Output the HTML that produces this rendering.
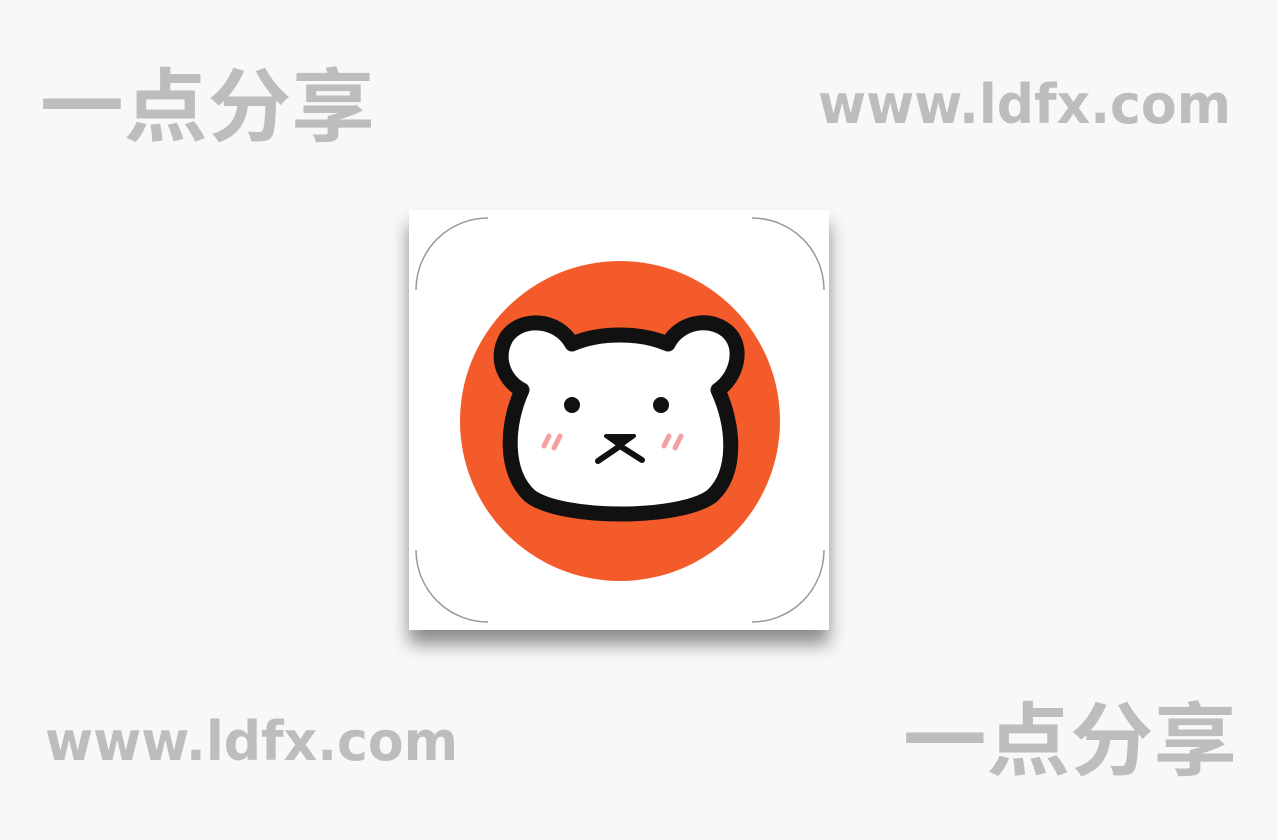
<!DOCTYPE html>
<html><head><meta charset="utf-8"><style>
html,body{margin:0;padding:0;background:#f8f8f8;}
body{width:1278px;height:840px;overflow:hidden;position:relative;}
svg{position:absolute;left:0;top:0;}
</style></head><body>
<svg width="1278" height="840" viewBox="0 0 1278 840">
<defs>
<filter id="sh" x="-20%" y="-20%" width="140%" height="150%">
<feGaussianBlur in="SourceAlpha" stdDeviation="9"/>
<feOffset dx="0" dy="14"/>
<feComponentTransfer><feFuncA type="linear" slope="0.45"/></feComponentTransfer>
<feMerge><feMergeNode/><feMergeNode in="SourceGraphic"/></feMerge>
</filter>
</defs>
<g fill="#bdbdbd" font-weight="bold">
<text x="40" y="135" font-size="80" font-family="Noto Sans CJK SC, WenQuanYi Zen Hei, sans-serif" textLength="335" lengthAdjust="spacingAndGlyphs">一点分享</text>
<text x="903" y="769" font-size="80" font-family="Noto Sans CJK SC, WenQuanYi Zen Hei, sans-serif" textLength="334" lengthAdjust="spacingAndGlyphs">一点分享</text>
<text x="818" y="123" font-size="54" font-family="DejaVu Sans, Liberation Sans, sans-serif" textLength="413" lengthAdjust="spacingAndGlyphs">www.ldfx.com</text>
<text x="45" y="760" font-size="54" font-family="DejaVu Sans, Liberation Sans, sans-serif" textLength="413" lengthAdjust="spacingAndGlyphs">www.ldfx.com</text>
</g>
<rect x="409" y="210" width="420" height="420" fill="#fff" filter="url(#sh)"/>
<g fill="none" stroke="#999" stroke-width="1.5">
<path d="M416,290 A72,72 0 0 1 488,218"/>
<path d="M752,218 A72,72 0 0 1 824,290"/>
<path d="M416,550 A72,72 0 0 0 488,622"/>
<path d="M824,550 A72,72 0 0 1 752,622"/>
</g>
<circle cx="620" cy="421" r="160" fill="#f45b2b"/>
<path d="M572,344 C558,318 520,316 506,338 C494,360 506,382 522,390 C506,425 504,472 530,496 C562,520 680,520 712,496 C738,472 734,425 718,390 C736,378 744,350 730,334 C714,316 680,320 668,344 C640,332 600,332 572,344 Z" fill="#fff" stroke="#111" stroke-width="15" stroke-linejoin="round"/>
<circle cx="572" cy="405" r="8" fill="#111"/>
<circle cx="661" cy="405" r="8" fill="#111"/>
<g stroke="#f4a0a0" stroke-width="5" stroke-linecap="round">
<line x1="544" y1="446" x2="549" y2="436"/><line x1="554" y1="448" x2="560" y2="436"/>
<line x1="664" y1="446" x2="669" y2="436"/><line x1="675" y1="448" x2="681" y2="436"/>
</g>
<path d="M606,436 L634,436 L620,446 Z" fill="#111" stroke="#111" stroke-width="4" stroke-linejoin="round"/>
<path d="M620,446 L598,461 M620,446 L642,460" fill="none" stroke="#111" stroke-width="6" stroke-linecap="round"/>
</svg>
</body></html>
